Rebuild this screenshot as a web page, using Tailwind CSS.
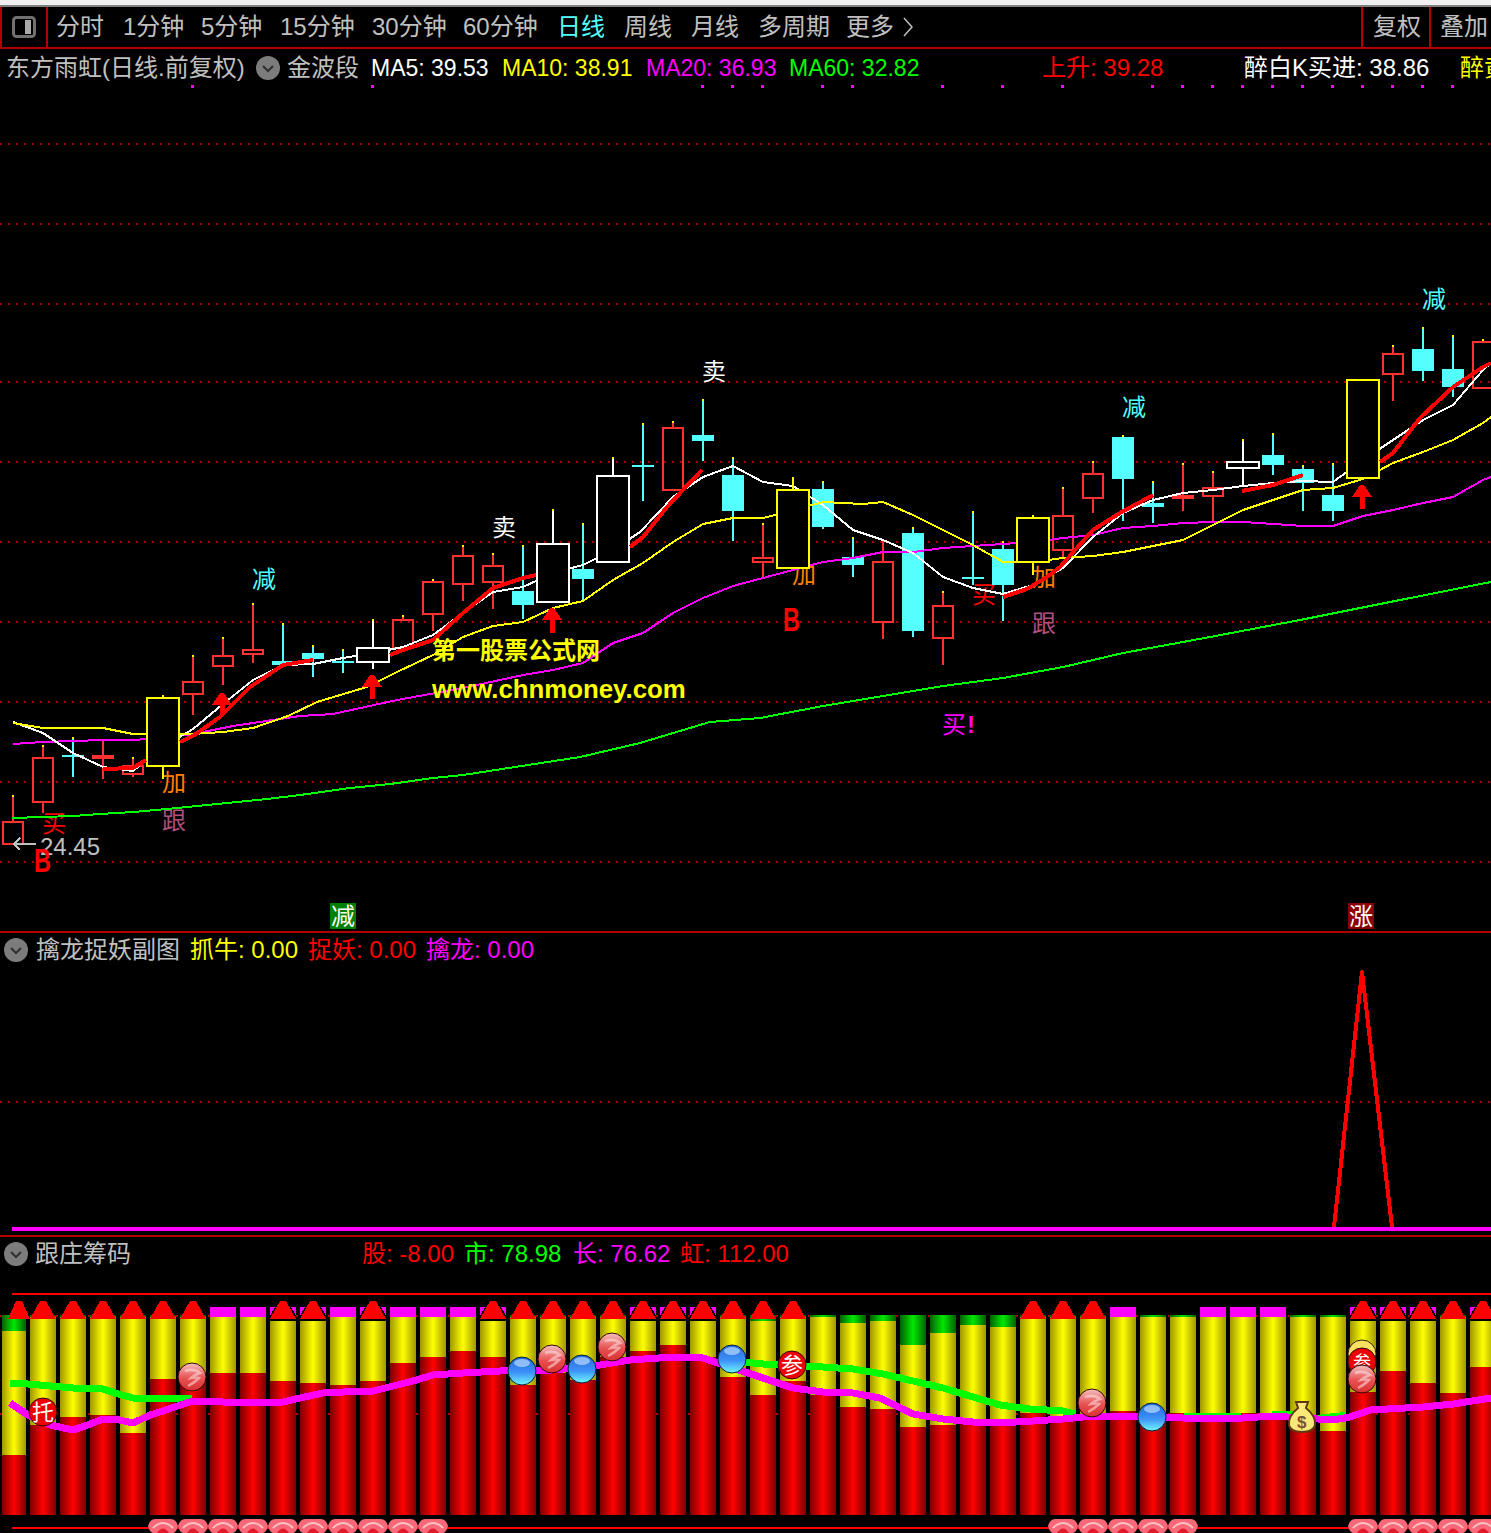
<!DOCTYPE html>
<html lang="zh-CN">

<head>
    <meta charset="UTF-8">
    <title>东方雨虹 日线</title>
    <script src="https://cdn.jsdelivr.net/npm/@tailwindcss/browser@4"></script>
</head>

<body class="w-[1491px] h-[1533px] bg-black overflow-hidden flex flex-col font-['Liberation_Sans','Noto_Sans_CJK_SC',sans-serif] text-[24px] leading-none text-[#c0c0c0]">
    <!--Window edge-->
    <div class="h-[5px] bg-[#f0f0f0]"></div>
    <div class="h-[2px] bg-[#808080]"></div>

    <!--Period toolbar-->
    <div class="h-[42px] border-b-2 border-[#b00000] flex items-center whitespace-nowrap">
        <div class="w-[48px] h-full border-l-2 border-r-2 border-[#b00000] flex items-center justify-center">
            <svg width="24" height="22" viewBox="0 0 24 22">
                <rect x="1.5" y="1.5" width="21" height="19" rx="3" fill="none" stroke="#707070" stroke-width="3" />
                <rect x="13" y="4" width="6" height="14" fill="#a8a8a8" />
            </svg>
        </div>
        <div class="w-[8px]"></div>
        <span class="w-[67px]">分时</span>
        <span class="w-[78px]">1分钟</span>
        <span class="w-[79px]">5分钟</span>
        <span class="w-[92px]">15分钟</span>
        <span class="w-[91px]">30分钟</span>
        <span class="w-[94px]">60分钟</span>
        <span class="w-[67px] text-[#54ffff]">日线</span>
        <span class="w-[67px]">周线</span>
        <span class="w-[67px]">月线</span>
        <span class="w-[88px]">多周期</span>
        <span class="w-[57px]">更多</span>
        <svg width="10" height="20" viewBox="0 0 10 20" fill="none" stroke="#c0c0c0" stroke-width="1.5">
            <path d="M1 1 L9 10 L1 19" />
        </svg>
        <div class="ml-[448px] h-full border-l-2 border-[#b00000] pl-[10px] w-[68px] flex items-center"><span>复权</span></div>
        <div class="h-full border-l-2 border-[#b00000] pl-[9px] flex items-center"><span>叠加</span></div>
    </div>

    <!--Main chart legend-->
    <div class="h-[36px] pt-[2px] flex items-center whitespace-nowrap overflow-hidden">
        <span class="w-[256px] shrink-0 pl-[6px]">东方雨虹(日线.前复权)</span>
        <div class="w-[31px] shrink-0">
            <svg width="24" height="24" viewBox="0 0 24 24">
                <ellipse cx="12" cy="12" rx="12" ry="12" fill="#7c7c7c" />
                <path d="M7 10 L12 15 L17 10" fill="none" stroke="#303030" stroke-width="2" />
            </svg>
        </div>
        <span class="w-[84px] shrink-0">金波段</span>
        <span class="w-[131px] shrink-0 text-[23px] text-white">MA5: 39.53</span>
        <span class="w-[144px] shrink-0 text-[23px] text-[#ffff00]">MA10: 38.91</span>
        <span class="w-[143px] shrink-0 text-[23px] text-[#ff00ff]">MA20: 36.93</span>
        <span class="w-[253px] shrink-0 text-[23px] text-[#00ff00]">MA60: 32.82</span>
        <span class="w-[202px] shrink-0 text-[#ff0000]">上升: 39.28</span>
        <span class="w-[216px] shrink-0 text-white">醉白K买进: 38.86</span>
        <span class="shrink-0 text-[#ffff00]">醉黄K买进: 38.12</span>
    </div>

    <!--Main chart-->
    <div class="h-[846px] relative" id="mainChart"></div>
    <div class="h-[2px] bg-[#b00000]"></div>

    <!--Sub chart 1-->
    <div class="h-[33px] flex items-center whitespace-nowrap">
        <div class="w-[32px] pl-[4px]">
            <svg width="24" height="24" viewBox="0 0 24 24">
                <ellipse cx="12" cy="12" rx="12" ry="12" fill="#7c7c7c" />
                <path d="M7 10 L12 15 L17 10" fill="none" stroke="#303030" stroke-width="2" />
            </svg>
        </div>
        <span class="pl-[4px] w-[158px]">擒龙捉妖副图</span>
        <span class="w-[118px] text-[#ffff00]">抓牛: 0.00</span>
        <span class="w-[118px] text-[#ff0000]">捉妖: 0.00</span>
        <span class="text-[#ff00ff]">擒龙: 0.00</span>
    </div>
    <div class="h-[269px]" id="subChartOne"></div>
    <div class="h-[2px] bg-[#b00000]"></div>

    <!--Sub chart 2-->
    <div class="h-[34px] flex items-center whitespace-nowrap">
        <div class="w-[32px] pl-[4px]">
            <svg width="24" height="24" viewBox="0 0 24 24">
                <ellipse cx="12" cy="12" rx="12" ry="12" fill="#7c7c7c" />
                <path d="M7 10 L12 15 L17 10" fill="none" stroke="#303030" stroke-width="2" />
            </svg>
        </div>
        <span class="pl-[3px] w-[330px]">跟庄筹码</span>
        <span class="w-[102px] text-[#ff0000]">股: -8.00</span>
        <span class="w-[109px] text-[#00ff00]">市: 78.98</span>
        <span class="w-[107px] text-[#ff00ff]">长: 76.62</span>
        <span class="text-[#ff0000]">虹: 112.00</span>
    </div>
    <div class="h-[262px]" id="subChartTwo"></div>

    <script>
        const FONT = "Liberation Sans, Noto Sans CJK SC, sans-serif";
        const cx = i => 13 + 30 * i;

        // type, box top, box bottom, wick top, wick bottom
        // r hollow red, R solid red, c solid cyan, W white black-filled, Y yellow black-filled
        const candles = [
            ['r', 821, 845, 795, 845], ['r', 757, 803, 745, 813], ['c', 755, 757, 737, 777], ['R', 755, 759, 739, 779],
            ['r', 765, 775, 757, 777], ['Y', 697, 767, 695, 779], ['r', 681, 695, 655, 715], ['r', 655, 667, 637, 685],
            ['r', 649, 655, 603, 663], ['c', 661, 665, 623, 665], ['c', 653, 659, 645, 677], ['c', 661, 663, 649, 673],
            ['W', 647, 663, 619, 669], ['r', 619, 649, 615, 649], ['r', 581, 615, 579, 631], ['r', 555, 585, 545, 601],
            ['r', 565, 583, 553, 609], ['c', 591, 605, 545, 619], ['W', 543, 603, 509, 603], ['c', 569, 579, 523, 601],
            ['W', 475, 563, 457, 563], ['c', 465, 467, 423, 501], ['r', 427, 491, 421, 491], ['c', 435, 441, 399, 461],
            ['c', 475, 511, 457, 541], ['r', 557, 563, 523, 577], ['Y', 489, 569, 477, 569], ['c', 489, 527, 481, 529],
            ['c', 557, 565, 537, 577], ['r', 561, 623, 539, 639], ['c', 533, 631, 527, 637], ['r', 605, 639, 591, 665],
            ['c', 577, 579, 511, 585], ['c', 549, 585, 541, 621], ['Y', 517, 563, 515, 575], ['r', 515, 551, 487, 557],
            ['r', 473, 499, 461, 513], ['c', 437, 479, 435, 521], ['c', 503, 507, 481, 523], ['R', 495, 499, 463, 511],
            ['r', 487, 497, 471, 521], ['W', 461, 469, 439, 487], ['c', 455, 465, 433, 475], ['c', 469, 483, 465, 511],
            ['c', 495, 511, 463, 521], ['Y', 379, 479, 379, 479], ['r', 353, 375, 345, 401], ['c', 349, 371, 327, 381],
            ['c', 369, 387, 335, 397], ['r', 341, 389, 339, 389]
        ];

        const ma5 = "13,722 43,733 73,753 103,767 133,771 163,747 193,729 223,704 253,680 283,665 313,664 343,658 373,653 403,647 433,635 463,613 493,592 523,587 553,573 583,565 613,550 640,532 673,497 703,477 733,466 763,482 793,486 823,505 853,530 883,540 913,553 943,577 973,588 1003,594 1033,585 1063,568 1093,537 1123,513 1153,500 1183,493 1213,490 1243,486 1273,483 1303,481 1333,482 1363,460 1393,440 1423,420 1453,405 1483,370 1491,363";
        const ma10 = "13,723 43,728 103,728 133,734 163,735 193,734 223,732 253,728 288,716 317,702 367,687 397,672 433,655 463,637 493,626 523,622 553,608 583,601 613,580 643,563 673,542 703,524 733,518 763,518 775,515 823,502 863,504 883,502 913,515 943,530 973,545 1003,562 1033,562 1063,558 1093,556 1123,552 1183,540 1213,525 1243,510 1273,500 1303,490 1333,488 1363,479 1393,463 1423,452 1453,440 1483,423 1491,417";
        const ma20 = "13,744 43,742 73,741 103,740 133,740 163,738 193,734 233,726 286,718 300,716 333,714 397,700 463,688 523,675 553,670 583,663 613,643 643,633 673,613 703,598 733,586 763,578 793,570 823,562 853,558 883,552 913,552 943,548 973,546 1003,544 1033,542 1063,538 1093,535 1123,528 1153,526 1183,523 1213,522 1243,522 1273,524 1303,526 1333,526 1363,516 1393,510 1423,503 1453,497 1483,480 1491,477";
        const ma60 = "12,818 73,816 100,814 133,812 167,809 217,804 267,799 300,795 350,788 390,784 433,778 463,775 580,757 640,743 710,722 760,718 823,706 883,696 943,686 1003,678 1063,667 1123,653 1210,637 1300,620 1400,600 1491,582";
        const redSegments = [
            "103,769 133,768 146,760", "180,742 193,736 220,717 250,687 283,665 313,660",
            "390,655 400,651 433,640 463,613 493,588 523,578 536,575",
            "630,547 643,537 667,507 683,490 702,470",
            "1003,597 1027,589 1047,577 1060,567 1093,530 1120,513 1153,495",
            "1242,491 1273,485 1303,475",
            "1380,462 1393,453 1420,418 1453,387 1483,367 1491,363"
        ];
        const topDots = [192, 372, 702, 732, 762, 822, 852, 942, 1002, 1062, 1152, 1182, 1212, 1242, 1272, 1302, 1332, 1362, 1392, 1422, 1452];
        const gridLines = [144, 224, 304, 382, 462, 542, 622, 702, 782, 862];
        // text, left, vertical centre, colour
        const labels = [
            ['买', 42, 823, '#ff0000'], ['加', 162, 782, '#ff8000'], ['跟', 162, 820, '#b05080'], ['减', 252, 579, '#54ffff'],
            ['卖', 492, 527, '#ffffff'], ['卖', 702, 371, '#ffffff'], ['加', 792, 574, '#ff8000'], ['跟', 1032, 623, '#b05080'],
            ['加', 1032, 577, '#ff8000'], ['买', 972, 594, '#ff0000'], ['买', 942, 724, '#ff00ff'], ['!', 967, 724, '#ff00ff'],
            ['减', 1122, 407, '#54ffff'], ['减', 1422, 299, '#54ffff']
        ];

        const text = (t, x, y, fill, size = 24, extra = '') =>
            `<text x="${x}" y="${y}" fill="${fill}" font-size="${size}" font-family="${FONT}" ${extra}>${t}</text>`;
        const rect = (x, y, w, h, fill) => `<rect x="${x}" y="${y}" width="${w}" height="${h}" fill="${fill}"/>`;
        const line = (pts, color, w) => `<polyline points="${pts}" fill="none" stroke="${color}" stroke-width="${w}" stroke-linejoin="round"/>`;
        const grid = y => `<line x1="0" y1="${y}" x2="1491" y2="${y}" stroke="#a80000" stroke-width="2" stroke-dasharray="2 6"/>`;

        function candle([t, top, bot, wt, wb], i) {
            const c = cx(i);
            const wide = t == 'W' || t == 'Y';
            const half = wide ? 17 : 11;
            const color = { r: '#ff3232', R: '#ff3232', c: '#54ffff', W: '#ffffff', Y: '#ffff00' }[t];
            // wick stops at the box, hollow red candles stay empty
            let s = rect(c - 1, wt, 2, top - wt, color) + rect(c - 1, bot, 2, wb - bot, color) + rect(c - 1, wt, 2, 2, '#ffff00');
            if (t == 'c' || t == 'R') {
                s += rect(c - half, top, half * 2, bot - top, color);
            } else {
                s += `<rect x="${c - half + 1}" y="${top + 1}" width="${half * 2 - 2}" height="${bot - top - 2}" fill="${wide ? '#000' : 'none'}" stroke="${color}" stroke-width="2"/>`;
            }
            return s;
        }

        function upArrow(x, top, head, bottom) {
            return `<polygon points="${x - 2},${top} ${x + 2},${top} ${x + 10},${head} ${x - 10},${head}" fill="#ff0000"/>` + rect(x - 2, head, 5, bottom - head, '#ff0000');
        }

        // main chart
        let main = gridLines.map(grid).join('');
        main += topDots.map(x => rect(x - 1, 85, 3, 3, '#ff00ff')).join('');
        main += labels.map(([t, x, y, c]) => text(t, x, y + 9, c, 24, t == '!' ? 'font-weight="bold"' : '')).join('');
        candles.forEach((c, i) => { if (c[0] != 'W' && c[0] != 'Y') main += candle(c, i); });
        main += line(ma60, '#00ff00', 2) + line(ma20, '#ff00ff', 2) + line(ma5, '#ffffff', 2) + line(ma10, '#ffff00', 2);
        candles.forEach((c, i) => { if (c[0] == 'W' || c[0] == 'Y') main += candle(c, i); });
        main += redSegments.map(p => line(p, '#ff0000', 4)).join('');
        main += upArrow(222, 693, 705, 714) + upArrow(372, 675, 687, 699) + upArrow(552, 608, 620, 633) + upArrow(1362, 485, 497, 509);
        main += line('36,844 14,844', '#c0c0c0', 2) + line('20,838 14,844 20,850', '#c0c0c0', 2);
        main += text('24.45', 40, 855, '#c0c0c0', 24);
        main += text('B', 34, 872, '#ff0000', 34, 'font-weight="bold" textLength="17" lengthAdjust="spacingAndGlyphs"');
        main += text('B', 783, 631, '#ff0000', 34, 'font-weight="bold" textLength="17" lengthAdjust="spacingAndGlyphs"');
        main += text('第一股票公式网', 432, 659, '#ffff00', 24, 'font-weight="bold"');
        main += text('www.chnmoney.com', 432, 698, '#ffff00', 25.8, 'font-weight="bold"');
        main += rect(330, 903, 26, 26, '#008000') + text('减', 331, 925, '#ffffff');
        main += rect(1348, 903, 26, 26, '#8b0000') + text('涨', 1349, 925, '#ffffff');
        document.getElementById('mainChart').innerHTML =
            `<svg class="block" width="1491" height="846" viewBox="0 85 1491 846" shape-rendering="crispEdges">${main}</svg>`;

        // sub chart 1
        document.getElementById('subChartOne').innerHTML =
            `<svg class="block" width="1491" height="269" viewBox="0 966 1491 269" shape-rendering="crispEdges">${grid(1102)}${line('1334,1227 1362,972 1392,1227', '#ff0000', 4)}${rect(12, 1227, 1479, 4, '#ff00ff')}</svg>`;

        // sub chart 2: cap (t triangle, m magenta, b both), green end, red start
        const bars = [
            ['', 1331, 1455], ['t', 1317, 1425], ['t', 1317, 1417], ['t', 1317, 1415], ['t', 1317, 1433], ['t', 1317, 1379], ['t', 1317, 1374],
            ['m', 1317, 1373], ['m', 1317, 1373], ['b', 1317, 1381], ['b', 1317, 1383], ['m', 1317, 1385], ['b', 1317, 1381], ['m', 1317, 1363],
            ['m', 1317, 1357], ['m', 1317, 1351], ['b', 1317, 1357], ['t', 1317, 1385], ['t', 1317, 1373], ['t', 1317, 1380], ['t', 1317, 1357],
            ['b', 1317, 1351], ['b', 1317, 1345], ['b', 1317, 1357], ['t', 1317, 1377], ['t', 1321, 1395], ['t', 1317, 1381], ['', 1317, 1395],
            ['', 1323, 1407], ['', 1321, 1409], ['', 1345, 1427], ['', 1333, 1425], ['', 1325, 1420], ['', 1327, 1419], ['t', 1317, 1413],
            ['t', 1317, 1417], ['t', 1317, 1417], ['m', 1317, 1411], ['', 1317, 1420], ['', 1317, 1413], ['m', 1317, 1413], ['m', 1317, 1413],
            ['m', 1317, 1413], ['', 1317, 1425], ['', 1317, 1431], ['b', 1317, 1392], ['b', 1317, 1371], ['b', 1317, 1383], ['t', 1317, 1393],
            ['b', 1317, 1367]
        ];
        const chipGreen = ["10,1383 28,1384 73,1388 103,1389 118,1394 133,1398 163,1399 192,1398",
            "733,1361 763,1364 793,1366 823,1367 853,1369 883,1374 913,1381 943,1388 973,1397 1000,1405 1030,1409 1063,1411 1075,1414"];
        const chipMagenta = "10,1403 28,1415 50,1425 73,1430 85,1426 103,1419 115,1419 133,1423 150,1415 163,1411 180,1405 193,1401 223,1402 253,1403 283,1402 300,1398 323,1393 343,1392 373,1391 393,1386 413,1381 433,1375 463,1373 500,1371 553,1370 583,1367 600,1365 630,1360 673,1357 703,1358 733,1368 763,1378 793,1388 823,1392 853,1393 880,1398 913,1414 943,1419 973,1422 1000,1423 1033,1421 1063,1419 1093,1416 1123,1416 1153,1417 1183,1418 1243,1418 1273,1416 1333,1420 1350,1417 1370,1410 1423,1407 1453,1404 1491,1398";

        function cap(c, half = 13) {
            return `<polygon points="${c - 3},1301 ${c + 3},1301 ${c + half},1319 ${c - half},1319" fill="#ff0000"/>`;
        }

        function bar([kind, green, red], i) {
            const x = i == 0 ? 2 : cx(i) - 13;
            const w = i == 0 ? 24 : 26;
            const c = cx(i);
            let s = '';
            if (kind != 'm' && kind != 'b') s += rect(x, 1315, w, green - 1315, 'url(#barGreen)');
            s += rect(x, 1317, w, red - 1317, 'url(#barYellow)');
            if (green > 1317) s = rect(x, 1315, w, green - 1315, 'url(#barGreen)') + rect(x, green, w, red - green, 'url(#barYellow)');
            s += rect(x, red, w, 1515 - red, 'url(#barRed)');
            if (kind == 'm' || kind == 'b') s += rect(x, 1307, w, 10, '#ff00ff');
            if (kind == 'b') s += `<polygon points="${c - 3},1301 ${c + 3},1301 ${c + 13},1319 ${c - 13},1319" fill="#000" stroke="#000" stroke-width="3"/>`;
            if (kind == 't' || kind == 'b') s += cap(c);
            return s;
        }

        function orb(x, y, kind) {
            if (kind == 'red') {
                return `<g shape-rendering="auto"><circle cx="${x}" cy="${y}" r="14" fill="url(#orbRed)" stroke="#300808"/><path d="M${x - 7} ${y - 6} Q${x + 2} ${y - 9} ${x + 8} ${y - 4} Q${x + 2} ${y - 2} ${x - 1} ${y + 1} Q${x + 4} ${y} ${x + 7} ${y + 1} Q${x + 2} ${y + 6} ${x - 4} ${y + 9}" fill="none" stroke="#fbd8d8" stroke-width="2.5" opacity="0.6"/></g>`;
            }
            return `<g shape-rendering="auto"><circle cx="${x}" cy="${y}" r="14" fill="url(#orbBlue)" stroke="#08203c"/><ellipse cx="${x}" cy="${y - 8}" rx="8" ry="4" fill="#b8dcff" opacity="0.7"/></g>`;
        }

        function seal(x, y, t, size = 22) {
            return `<g shape-rendering="auto"><circle cx="${x}" cy="${y}" r="14" fill="#ee0000" stroke="#300808"/>${text(t, x - size / 2, y + size * 0.37, '#ffffff', size)}</g>`;
        }

        function sushi(x) {
            return `<g shape-rendering="auto"><path d="M${x - 15} 1526 Q${x - 13} 1519 ${x - 8} 1519 H${x + 8} Q${x + 13} 1519 ${x + 15} 1526 Q${x + 13} 1533 ${x + 10} 1533 H${x - 10} Q${x - 13} 1533 ${x - 15} 1526 Z" fill="#f86878"/><path d="M${x - 10} 1528 Q${x} 1518 ${x + 10} 1528" fill="none" stroke="#ffc0c0" stroke-width="2"/><path d="M${x - 6} 1533 Q${x} 1524 ${x + 6} 1533 Z" fill="#e01828"/></g>`;
        }

        let chips = grid(1316) + grid(1414);
        chips += bars.map(bar).join('');
        chips += cap(19, 11);
        chips += chipGreen.map(p => line(p, '#00ff00', 7)).join('');
        chips += rect(1184, 1413, 57, 2, '#00ff00') + line('1272,1412 1310,1413', '#00ff00', 3) + line('1316,1417 1345,1414', '#00ff00', 4);
        chips += line(chipMagenta, '#ff00ff', 7);
        chips += rect(12, 1527, 1479, 2, '#ff0000') + rect(12, 1293, 1479, 2, '#ff0000');
        for (let i = 5; i <= 14; i++) chips += sushi(cx(i));
        for (let i = 35; i <= 39; i++) chips += sushi(cx(i));
        for (let i = 45; i <= 49; i++) chips += sushi(cx(i));
        chips += orb(192, 1377, 'red') + orb(552, 1359, 'red') + orb(612, 1347, 'red') + orb(1092, 1403, 'red');
        chips += orb(522, 1371, 'blue') + orb(582, 1369, 'blue') + orb(732, 1359, 'blue') + orb(1152, 1417, 'blue');
        chips += seal(43, 1412, '托') + seal(792, 1365, '参');
        chips += `<circle cx="1362" cy="1354" r="14" fill="#f8e060" stroke="#302000" shape-rendering="auto"/>` + seal(1362, 1362, '参', 18) + orb(1362, 1379, 'red');
        // money bag
        chips += `<g shape-rendering="auto"><path d="M1296 1402 H1308 L1306 1408 Q1316 1416 1315 1425 Q1314 1432 1302 1432 Q1290 1432 1289 1425 Q1288 1416 1298 1408 Z" fill="#f8e878" stroke="#603810" stroke-width="2"/>${text('$', 1297, 1428, '#805030', 17, 'font-weight="bold"')}</g>`;

        document.getElementById('subChartTwo').innerHTML =
            `<svg class="block" width="1491" height="262" viewBox="0 1271 1491 262" shape-rendering="crispEdges"><defs>
                <linearGradient id="barRed"><stop offset="0" stop-color="#7c0000"/><stop offset="0.5" stop-color="#ff0000"/><stop offset="1" stop-color="#7c0000"/></linearGradient>
                <linearGradient id="barYellow"><stop offset="0" stop-color="#a09800"/><stop offset="0.5" stop-color="#ffff00"/><stop offset="1" stop-color="#a09800"/></linearGradient>
                <linearGradient id="barGreen"><stop offset="0" stop-color="#006000"/><stop offset="0.5" stop-color="#00e800"/><stop offset="1" stop-color="#006000"/></linearGradient>
                <linearGradient id="orbRed" x2="0" y2="1"><stop offset="0" stop-color="#f4c0c0"/><stop offset="0.55" stop-color="#e85050"/><stop offset="1" stop-color="#d83030"/></linearGradient>
                <linearGradient id="orbBlue" x2="0" y2="1"><stop offset="0" stop-color="#2868d8"/><stop offset="0.55" stop-color="#3c90f8"/><stop offset="1" stop-color="#70f8ff"/></linearGradient>
            </defs>${chips}</svg>`;
    </script>
</body>

</html>
